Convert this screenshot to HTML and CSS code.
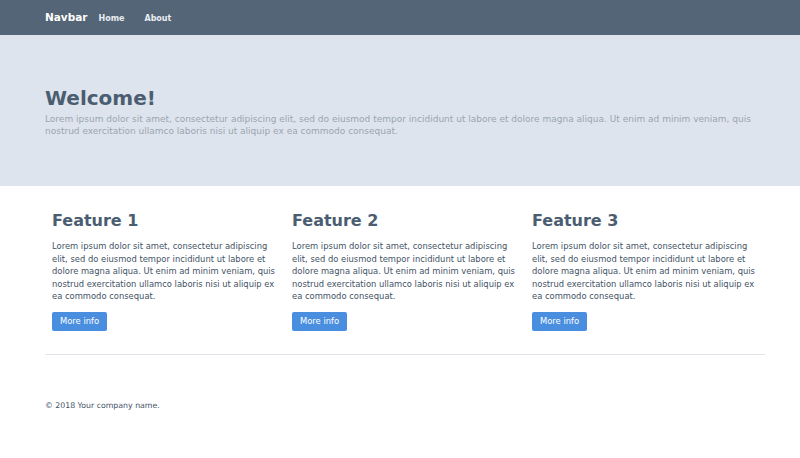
FILE: index.html
```html
<!DOCTYPE html>
<html>
<head>
<meta charset="utf-8">
<link rel="stylesheet" href="styles.css">
</head>
<body>
<nav class="navbar">
  <div class="container nav-inner">
    <span class="brand">Navbar</span>
    <a class="nav-link">Home</a>
    <a class="nav-link">About</a>
  </div>
</nav>
<header class="jumbotron">
  <div class="container">
    <h1 class="title">Welcome!</h1>
    <p class="lead">Lorem ipsum dolor sit amet, consectetur adipiscing elit, sed do eiusmod tempor incididunt ut labore et dolore magna aliqua. Ut enim ad minim veniam, quis nostrud exercitation ullamco laboris nisi ut aliquip ex ea commodo consequat.</p>
  </div>
</header>
<main class="container">
  <div class="row">
    <div class="col">
      <h2 class="feature-title">Feature 1</h2>
      <p class="feature-text">Lorem ipsum dolor sit amet, consectetur adipiscing elit, sed do eiusmod tempor incididunt ut labore et dolore magna aliqua. Ut enim ad minim veniam, quis nostrud exercitation ullamco laboris nisi ut aliquip ex ea commodo consequat.</p>
      <a class="btn">More info</a>
    </div>
    <div class="col">
      <h2 class="feature-title">Feature 2</h2>
      <p class="feature-text">Lorem ipsum dolor sit amet, consectetur adipiscing elit, sed do eiusmod tempor incididunt ut labore et dolore magna aliqua. Ut enim ad minim veniam, quis nostrud exercitation ullamco laboris nisi ut aliquip ex ea commodo consequat.</p>
      <a class="btn">More info</a>
    </div>
    <div class="col">
      <h2 class="feature-title">Feature 3</h2>
      <p class="feature-text">Lorem ipsum dolor sit amet, consectetur adipiscing elit, sed do eiusmod tempor incididunt ut labore et dolore magna aliqua. Ut enim ad minim veniam, quis nostrud exercitation ullamco laboris nisi ut aliquip ex ea commodo consequat.</p>
      <a class="btn">More info</a>
    </div>
  </div>
  <hr class="divider">
  <footer class="footer">© 2018 Your company name.</footer>
</main>
</body>
</html>
```
FILE: styles.css
```css
* { box-sizing: border-box; }
body {
  margin: 0;
  font-family: "DejaVu Sans", sans-serif;
  color: #3f5265;
  background: #fff;
}
.container {
  width: 720px;
  margin-left: 45px;
}
.navbar {
  background: #536577;
  height: 35px;
}
.nav-inner {
  display: flex;
  align-items: center;
  height: 35px;
}
.brand {
  color: #fff;
  font-weight: bold;
  font-size: 10.5px;
  margin-right: 11px;
  margin-top: -1px;
}
.nav-link {
  color: #e9edf1;
  font-weight: bold;
  font-size: 8px;
  margin-right: 20px;
  margin-top: 1px;
}
.jumbotron {
  background: #dee4ed;
  height: 151px;
  padding-top: 50px;
}
.title {
  margin: 0 0 2px;
  font-size: 20px;
  line-height: 26px;
  font-weight: bold;
  color: #4a5d71;
}
.lead {
  margin: 0;
  font-size: 9px;
  line-height: 12px;
  color: #9aa4b0;
}
.row {
  display: flex;
}
.col {
  width: 240px;
  padding: 24px 5px 0 7px;
}
.feature-title {
  margin: 0 0 8px;
  font-size: 16px;
  line-height: 22px;
  font-weight: bold;
  color: #4a5d71;
}
.feature-text {
  margin: 0 0 6px;
  font-size: 8.4px;
  line-height: 12.5px;
  color: #3f5265;
}
.btn {
  display: inline-block;
  background: #4a8fdf;
  color: #fff;
  font-size: 8.4px;
  line-height: 19px;
  padding: 0 8px;
  border-radius: 2px;
}
.divider {
  margin: 23px 0 0;
  border: 0;
  border-top: 1px solid #dfe4ea;
}
.footer {
  margin-top: 46px;
  font-size: 7.8px;
  color: #3f5265;
}
```
